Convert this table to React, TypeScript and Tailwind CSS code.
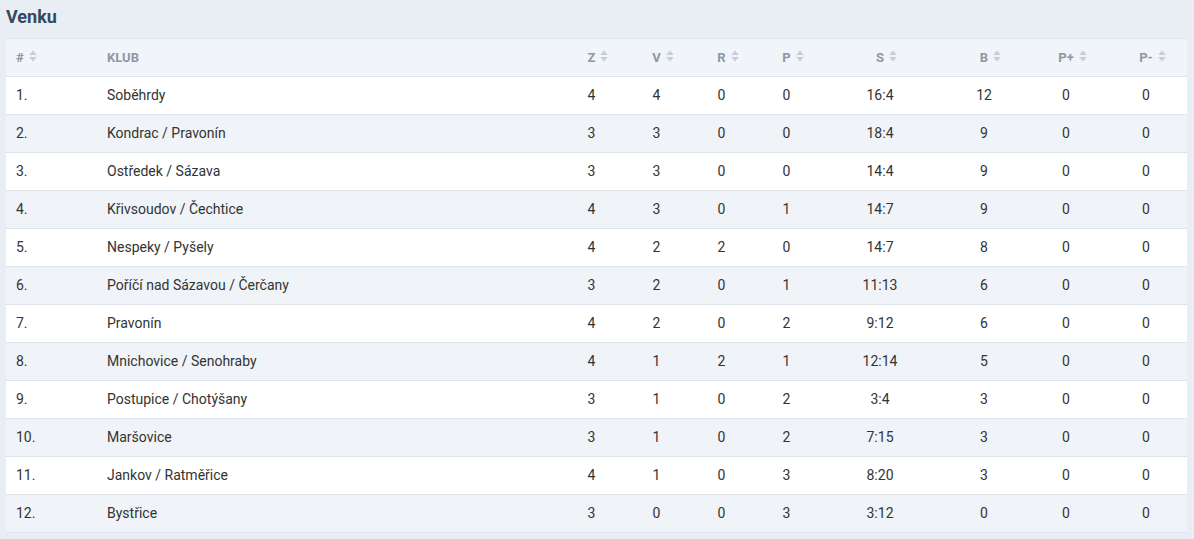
const rows: [string, string, number, number, number, number, string, number][] = [
  ["1.", "Soběhrdy", 4, 4, 0, 0, "16:4", 12],
  ["2.", "Kondrac / Pravonín", 3, 3, 0, 0, "18:4", 9],
  ["3.", "Ostředek / Sázava", 3, 3, 0, 0, "14:4", 9],
  ["4.", "Křivsoudov / Čechtice", 4, 3, 0, 1, "14:7", 9],
  ["5.", "Nespeky / Pyšely", 4, 2, 2, 0, "14:7", 8],
  ["6.", "Poříčí nad Sázavou / Čerčany", 3, 2, 0, 1, "11:13", 6],
  ["7.", "Pravonín", 4, 2, 0, 2, "9:12", 6],
  ["8.", "Mnichovice / Senohraby", 4, 1, 2, 1, "12:14", 5],
  ["9.", "Postupice / Chotýšany", 3, 1, 0, 2, "3:4", 3],
  ["10.", "Maršovice", 3, 1, 0, 2, "7:15", 3],
  ["11.", "Jankov / Ratměřice", 4, 1, 0, 3, "8:20", 3],
  ["12.", "Bystřice", 3, 0, 0, 3, "3:12", 0],
];

function SortIcon() {
  return (
    <svg width="8" height="12" viewBox="0 0 8 12" className="text-[#c6cdd6]">
      <path d="M4 0.5 L7.8 5 H0.2 Z" fill="currentColor" />
      <path d="M4 11.5 L7.8 7 H0.2 Z" fill="currentColor" />
    </svg>
  );
}

function Head({ label, center = true, icon = true, width }: { label: string; center?: boolean; icon?: boolean; width: string }) {
  return (
    <th className={`${width} h-[38px] px-[10px] font-bold text-[13px] uppercase text-[#8c98a6] ${center ? "text-center" : "text-left"}`}>
      <span className="relative inline-block">
        {label}
        {icon && (
          <span className="absolute left-full top-[2px] ml-[5px]">
            <SortIcon />
          </span>
        )}
      </span>
    </th>
  );
}

export default function App() {
  return (
    <div className="min-h-[539px] bg-[#e9eef4] px-[6px] pt-[5px] font-['Roboto',sans-serif]">
      <h2 className="mb-[9px] text-[18px] font-bold leading-[24px] text-[#34495e]">Venku</h2>
      <table className="w-[1181px] table-fixed border-collapse text-[14px] text-[#333]">
        <thead>
          <tr className="border-t border-b border-[#dde3ea] bg-[#f1f4f8]">
            <Head label="#" center={false} width="w-[91px]" />
            <Head label="Klub" center={false} icon={false} width="w-[462px]" />
            <Head label="Z" width="w-[65px]" />
            <Head label="V" width="w-[65px]" />
            <Head label="R" width="w-[65px]" />
            <Head label="P" width="w-[65px]" />
            <Head label="S" width="w-[122px]" />
            <Head label="B" width="w-[86px]" />
            <Head label="P+" width="w-[78px]" />
            <Head label="P-" width="w-[82px]" />
          </tr>
        </thead>
        <tbody>
          {rows.map((r, i) => (
            <tr key={r[0]} className={`h-[38px] border-b border-[#dde3ea] ${i % 2 === 0 ? "bg-white" : "bg-[#f0f3f7]"}`}>
              <td className="px-[10px]">{r[0]}</td>
              <td className="px-[10px]">{r[1]}</td>
              <td className="text-center">{r[2]}</td>
              <td className="text-center">{r[3]}</td>
              <td className="text-center">{r[4]}</td>
              <td className="text-center">{r[5]}</td>
              <td className="text-center">{r[6]}</td>
              <td className="text-center">{r[7]}</td>
              <td className="text-center">0</td>
              <td className="text-center">0</td>
            </tr>
          ))}
        </tbody>
      </table>
    </div>
  );
}
